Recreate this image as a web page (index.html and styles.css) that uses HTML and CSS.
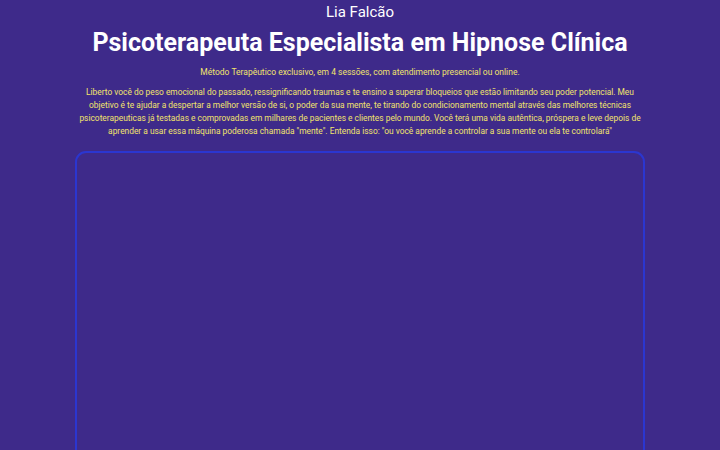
FILE: index.html
```html
<!DOCTYPE html>
<html lang="pt-BR">
<head>
<meta charset="utf-8">
<title>Lia Falcão</title>
<link rel="stylesheet" href="styles.css">
</head>
<body>
<main class="page">
  <header class="hero">
    <p class="name">Lia Falcão</p>
    <h1 class="title">Psicoterapeuta Especialista em Hipnose Clínica</h1>
    <p class="lead">Método Terapêutico exclusivo, em 4 sessões, com atendimento presencial ou online.</p>
    <p class="text">Liberto você do peso emocional do passado, ressignificando traumas e te ensino a superar bloqueios que estão limitando seu poder potencial. Meu<br>objetivo é te ajudar a despertar a melhor versão de si, o poder da sua mente, te tirando do condicionamento mental através das melhores técnicas<br>psicoterapeuticas já testadas e comprovadas em milhares de pacientes e clientes pelo mundo. Você terá uma vida autêntica, próspera e leve depois de<br>aprender a usar essa máquina poderosa chamada "mente". Entenda isso: "ou você aprende a controlar a sua mente ou ela te controlará"</p>
  </header>
  <section class="frame"></section>
</main>
</body>
</html>
```
FILE: styles.css
```css
html, body {
  margin: 0;
  padding: 0;
  background: #3e2a8a;
}
body {
  font-family: Roboto, "Noto Sans", sans-serif;
  color: #ffffff;
}
.page {
  width: 584px;
  margin: 0 auto;
  display: flex;
  flex-direction: column;
  align-items: center;
}
.hero {
  text-align: center;
}
.name {
  margin: 3px 0 0;
  font-size: 15px;
  line-height: 18px;
}
.title {
  margin: 7px 0 0;
  font-size: 25px;
  line-height: 30px;
  font-weight: 700;
}
.lead {
  margin: 8px 0 0;
  font-size: 8.5px;
  line-height: 13px;
  color: #f2e46c;
}
.text {
  margin: 7px 0 0;
  font-size: 8.4px;
  line-height: 13px;
  color: #f2e46c;
}
.frame {
  box-sizing: border-box;
  width: 570px;
  height: 330px;
  margin-top: 13px;
  border: 2px solid #2b36d0;
  border-radius: 11px;
}
```
